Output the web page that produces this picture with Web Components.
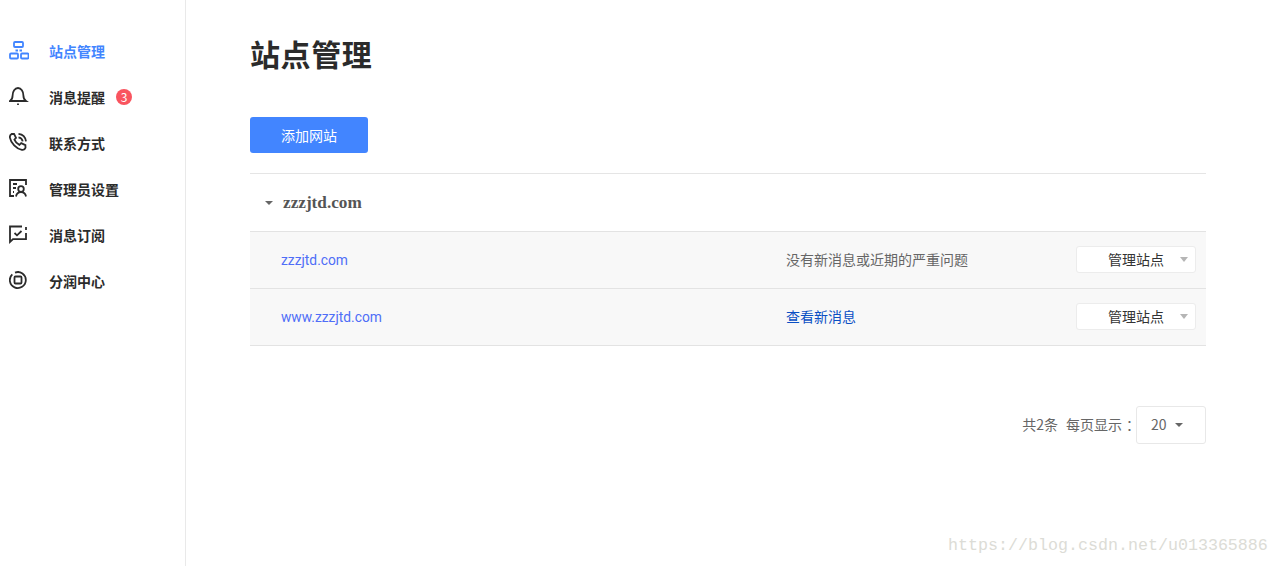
<!DOCTYPE html>
<html lang="zh">
<head>
<meta charset="utf-8">
<title>站点管理</title>
<style>
  html, body { margin: 0; height: 100%; background: #fff; overflow: hidden; }
  body { font-family: "Noto Sans CJK SC", "Liberation Sans", sans-serif; }
</style>
</head>
<body>
<app-shell>
  <side-menu slot="side">
    <menu-item active label="站点管理" icon="sites"></menu-item>
    <menu-item label="消息提醒" icon="bell" badge="3"></menu-item>
    <menu-item label="联系方式" icon="phone"></menu-item>
    <menu-item label="管理员设置" icon="admin"></menu-item>
    <menu-item label="消息订阅" icon="sub"></menu-item>
    <menu-item label="分润中心" icon="share"></menu-item>
  </side-menu>
  <site-page>
    <site-group name="zzzjtd.com">
      <site-row domain="zzzjtd.com" status="没有新消息或近期的严重问题"></site-row>
      <site-row domain="www.zzzjtd.com" status="查看新消息" link></site-row>
    </site-group>
    <page-size slot="footer" total="2" size="20"></page-size>
  </site-page>
</app-shell>

<script>
const ICONS = {
  sites: `<rect x="5" y="1" width="9" height="5" rx="1"/><rect x="1" y="12.500" width="8" height="5" rx="1"/><rect x="12" y="12.500" width="7.500" height="5" rx="1"/><path d="M6.500 9.500h2.500M10.500 9.500h2.500"/>`,
  bell: `<path d="M1 14c1.800-1.200 2.600-3 2.600-5.500C3.600 4.500 5.800 1 9 1s5.400 3.500 5.400 7.500c0 2.500.8 4.300 2.600 5.500z"/><path d="M9 16.500V18"/>`,
  phone: `<path d="M2.600 1 5 .8l2 4L5.400 6.600c.9 2.200 2.800 4.200 5 5.300l1.800-1.700 4.200 2 .1 2.600c-.5 1.500-2 2.300-3.600 2C7.400 15.800 1.800 9.800.9 4.600.7 3 1.400 1.700 2.600 1z"/><path d="M9.500.9c4 .5 7 3.500 7.500 7.500M9.500 4.400c2.200.4 3.800 2 4.200 4"/>`,
  admin: `<path d="M5 17H1V1h16v5"/><path d="M8 5H4M7 9H4M4 13h1"/><circle cx="12" cy="10" r="2.800"/><path d="M7 17.500c.5-2.800 2.500-4.300 5-4.300s4.500 1.500 5 4.300"/>`,
  sub: `<path d="M13 1.500H1v15.500l3-2.900h13V8"/><path d="M5.500 8l2.500 2.300L12.500 6"/><path d="M17 2v3"/>`,
  share: `<path d="M3.300 3.300A8 8 0 1 0 6 1.600M9 1h.8"/><rect x="5.500" y="5.500" width="7" height="7" rx="1"/>`
};

class MenuItem extends HTMLElement {
  constructor() {
    super();
    this.shadowDOM = this.attachShadow({mode: 'open'});
  }

  connectedCallback() {
    const badge = this.getAttribute('badge');
    const icon = ICONS[this.getAttribute('icon')];
    this.shadowDOM.innerHTML = `
      <style>
      :host {
        display: flex;
        align-items: center;
        height: 46px;
        padding-left: 9px;
        font-size: 14px;
        font-weight: 700;
        color: #2b2b2b;
      }
      :host([active]) { color: #4285ff; }
      svg {
        width: 20px;
        height: 20px;
        margin-right: 20px;
        fill: none;
        stroke: currentColor;
        stroke-width: 1.800;
      }
      .badge {
        width: 16px;
        height: 16px;
        margin-left: 11px;
        border-radius: 50%;
        background: #f9545f;
        color: #fff;
        font-size: 12px;
        font-weight: 400;
        line-height: 16px;
        text-align: center;
      }
      </style>
      <svg viewBox="0 0 20 20">${icon}</svg>
      <span>${this.getAttribute('label')}</span>
      ${badge ? `<span class="badge">${badge}</span>` : ''}
    `;
  }
}

class SideMenu extends HTMLElement {
  constructor() {
    super();
    this.shadowDOM = this.attachShadow({mode: 'open'});
    this.shadowDOM.innerHTML = `
      <style>
      :host {
        display: block;
        box-sizing: border-box;
        width: 186px;
        height: 100%;
        padding-top: 28px;
        border-right: 1px solid #e9e9e9;
      }
      </style>
      <slot></slot>
    `;
  }
}

class SiteRow extends HTMLElement {
  constructor() {
    super();
    this.shadowDOM = this.attachShadow({mode: 'open'});
  }

  connectedCallback() {
    this.shadowDOM.innerHTML = `
      <style>
      :host {
        display: flex;
        align-items: center;
        height: 56px;
        background: #f8f8f8;
        border-bottom: 1px solid #e3e3e3;
        font-size: 14px;
        line-height: 20px;
      }
      .domain {
        width: 505px;
        padding-left: 31px;
        color: #4f6ef7;
        font-family: Roboto, "Noto Sans CJK SC", sans-serif;
        font-size: 13.800px;
      }
      .status { flex: 1; color: #666; margin-top: -2px; }
      :host([link]) .status { color: #0a4fc4; }
      .manage {
        box-sizing: border-box;
        display: flex;
        align-items: center;
        width: 120px;
        height: 27px;
        margin-right: 10px;
        margin-top: -1px;
        padding-left: 31px;
        background: #fff;
        border: 1px solid #ececec;
        border-radius: 3px;
        color: #333;
      }
      .manage span { margin-top: -1px; }
      .manage i {
        margin-left: 16px;
        border: 4.500px solid transparent;
        border-top: 5px solid #b5b5b5;
        border-bottom: 0;
      }
      </style>
      <span class="domain">${this.getAttribute('domain')}</span>
      <span class="status">${this.getAttribute('status')}</span>
      <span class="manage"><span>管理站点</span><i></i></span>
    `;
  }
}

class SiteGroup extends HTMLElement {
  constructor() {
    super();
    this.shadowDOM = this.attachShadow({mode: 'open'});
  }

  connectedCallback() {
    this.shadowDOM.innerHTML = `
      <style>
      :host {
        display: block;
        border-top: 1px solid #e5e5e5;
      }
      header {
        display: flex;
        align-items: center;
        height: 57px;
        padding-left: 15px;
        border-bottom: 1px solid #e3e3e3;
        color: #555;
        font-family: "Liberation Serif", serif;
        font-size: 17.200px;
        font-weight: 700;
      }
      i {
        margin-right: 10px;
        border: 4px solid transparent;
        border-top: 4px solid #666;
        border-bottom: 0;
      }
      </style>
      <header><i></i>${this.getAttribute('name')}</header>
      <slot></slot>
    `;
  }
}

class PageSize extends HTMLElement {
  constructor() {
    super();
    this.shadowDOM = this.attachShadow({mode: 'open'});
  }

  connectedCallback() {
    this.shadowDOM.innerHTML = `
      <style>
      :host {
        display: flex;
        justify-content: flex-end;
        align-items: center;
        margin-top: 60px;
        font-size: 14px;
        color: #666;
      }
      .total { margin-right: 8px; margin-top: -2px; }
      .label { margin-top: -2px; white-space: nowrap; }
      .label b { font-weight: 400; padding-left: 4px; margin-right: -4px; }
      .select {
        box-sizing: border-box;
        display: flex;
        align-items: center;
        width: 70px;
        height: 38px;
        padding-left: 14px;
        border: 1px solid #e8e8e8;
        border-radius: 3px;
      }
      .select span { margin-top: -2px; }
      i {
        margin-left: 8px;
        border: 4px solid transparent;
        border-top: 4px solid #666;
        border-bottom: 0;
      }
      </style>
      <span class="total">共${this.getAttribute('total')}条</span>
      <span class="label">每页显示<b>：</b></span>
      <span class="select"><span>${this.getAttribute('size')}</span><i></i></span>
    `;
  }
}

class SitePage extends HTMLElement {
  constructor() {
    super();
    this.shadowDOM = this.attachShadow({mode: 'open'});
    this.shadowDOM.innerHTML = `
      <style>
      :host {
        display: block;
        flex: 1;
        padding: 31px 73px 0 64px;
      }
      h1 {
        margin: 0;
        height: 45px;
        font-size: 30px;
        line-height: 45px;
        font-weight: 700;
        letter-spacing: .6px;
        color: #2b2b2b;
      }
      button {
        display: block;
        width: 118px;
        height: 36px;
        margin: 41px 0 20px;
        padding: 0;
        border: 0;
        border-radius: 3px;
        background: #4285ff;
        color: #fff;
        font: 400 14px "Noto Sans CJK SC", sans-serif;
      }
      </style>
      <h1>站点管理</h1>
      <button>添加网站</button>
      <slot></slot>
      <slot name="footer"></slot>
    `;
  }
}

class AppShell extends HTMLElement {
  constructor() {
    super();
    this.shadowDOM = this.attachShadow({mode: 'open'});
    this.shadowDOM.innerHTML = `
      <style>
      :host {
        display: flex;
        position: relative;
        height: 566px;
      }
      .mark {
        position: absolute;
        left: 948px;
        top: 535px;
        font-family: "Liberation Mono", monospace;
        font-size: 16.670px;
        line-height: 22px;
        color: #dcdcd6;
      }
      </style>
      <slot name="side"></slot>
      <slot></slot>
      <div class="mark">https://blog.csdn.net/u013365886</div>
    `;
  }
}

customElements.define('menu-item', MenuItem);
customElements.define('side-menu', SideMenu);
customElements.define('site-row', SiteRow);
customElements.define('site-group', SiteGroup);
customElements.define('page-size', PageSize);
customElements.define('site-page', SitePage);
customElements.define('app-shell', AppShell);
</script>
</body>
</html>
